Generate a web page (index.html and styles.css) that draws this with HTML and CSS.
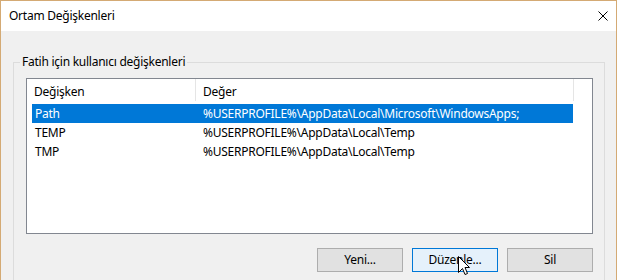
FILE: index.html
```html
<!DOCTYPE html>
<html lang="tr">
<head>
<meta charset="utf-8">
<title>Ortam Değişkenleri</title>
<link rel="stylesheet" href="styles.css">
</head>
<body>
<div class="window">
  <div class="titlebar">
    <span class="title">Ortam Değişkenleri</span>
    <svg class="close" width="10" height="10" viewBox="0 0 10 10"><path d="M0.5 0.5 L9.5 9.5 M9.5 0.5 L0.5 9.5" stroke="#000" stroke-width="1" fill="none"/></svg>
  </div>
  <div class="content">
    <div class="group">
      <div class="legend">Fatih için kullanıcı değişkenleri</div>
      <div class="listbox">
        <div class="header">
          <div class="th c1">Değişken</div>
          <div class="th c2">Değer</div>
        </div>
        <div class="row selected">
          <div class="td c1">Path</div>
          <div class="td c2">%USERPROFILE%\AppData\Local\Microsoft\WindowsApps;</div>
        </div>
        <div class="row">
          <div class="td c1">TEMP</div>
          <div class="td c2">%USERPROFILE%\AppData\Local\Temp</div>
        </div>
        <div class="row">
          <div class="td c1">TMP</div>
          <div class="td c2">%USERPROFILE%\AppData\Local\Temp</div>
        </div>
      </div>
      <div class="buttons">
        <button class="btn">Yeni...</button>
        <button class="btn focused">Düzenle...
          <svg class="cursor" width="13" height="20" viewBox="0 0 13 20"><path d="M0.5 0.5 L0.5 16.5 L4.5 12.5 L7 18.5 L9.5 17.5 L7 11.5 L11.5 11.5 Z" fill="#fff" stroke="#000" stroke-width="1" stroke-linejoin="miter"/></svg>
        </button>
        <button class="btn">Sil</button>
      </div>
    </div>
  </div>
</div>
</body>
</html>
```

FILE: styles.css
```css
* { box-sizing: border-box; }
html, body { margin: 0; padding: 0; }
body {
  width: 618px;
  height: 280px;
  background: #ffffff;
  font-family: "Noto Sans", "Open Sans", sans-serif;
  font-size: 12px;
  letter-spacing: -0.25px;
  color: #000;
  overflow: hidden;
}
.window {
  width: 617px;
  height: 280px;
  border: 1px solid #d4aa74;
  border-bottom: none;
  display: flex;
  flex-direction: column;
}
.titlebar {
  height: 30px;
  background: #fff;
  display: flex;
  align-items: center;
  justify-content: space-between;
  padding: 0 8px 0 8px;
}
.title { line-height: 16px; }
.close { display: block; }
.content {
  flex: 1;
  background: #f0f0f0;
  padding: 31px 11px 0 12px;
}
.group {
  border: 1px solid #dcdcdc;
  border-bottom: none;
  height: 100%;
  padding: 0 11px 0 12px;
}
.legend {
  width: fit-content;
  margin: -9px 0 8px -6px;
  padding: 0 2px;
  line-height: 16px;
  background: #f0f0f0;
}
.listbox {
  height: 156px;
  border: 1px solid #828790;
  background: #fff;
}
.header {
  display: flex;
  height: 22px;
  margin-bottom: 3px;
}
.th {
  line-height: 19px;
  padding-top: 3px;
  padding-left: 7px;
  border-right: 1px solid #e5e5e5;
  white-space: nowrap;
}
.header .c1 { width: 169px; }
.header .c2 { width: 378px; }
.row {
  display: flex;
  height: 19px;
  margin-left: 5px;
  width: 541px;
  line-height: 19px;
  white-space: nowrap;
}
.row .c1 { width: 164px; padding-left: 3px; }
.row .c2 { padding-left: 7px; }
.row.selected { background: #0078d7; color: #fff; }
.buttons {
  display: flex;
  justify-content: flex-end;
  gap: 9px;
  margin-top: 14px;
}
.btn {
  position: relative;
  width: 86px;
  height: 24px;
  background: #e1e1e1;
  border: 1px solid #adadad;
  font-family: inherit;
  font-size: 12px;
  letter-spacing: inherit;
  color: #000;
  padding: 0;
  line-height: 20px;
}
.btn.focused {
  background: #e5f1fb;
  border-color: #0078d7;
}
.cursor {
  position: absolute;
  left: 45px;
  top: 7px;
}
```
